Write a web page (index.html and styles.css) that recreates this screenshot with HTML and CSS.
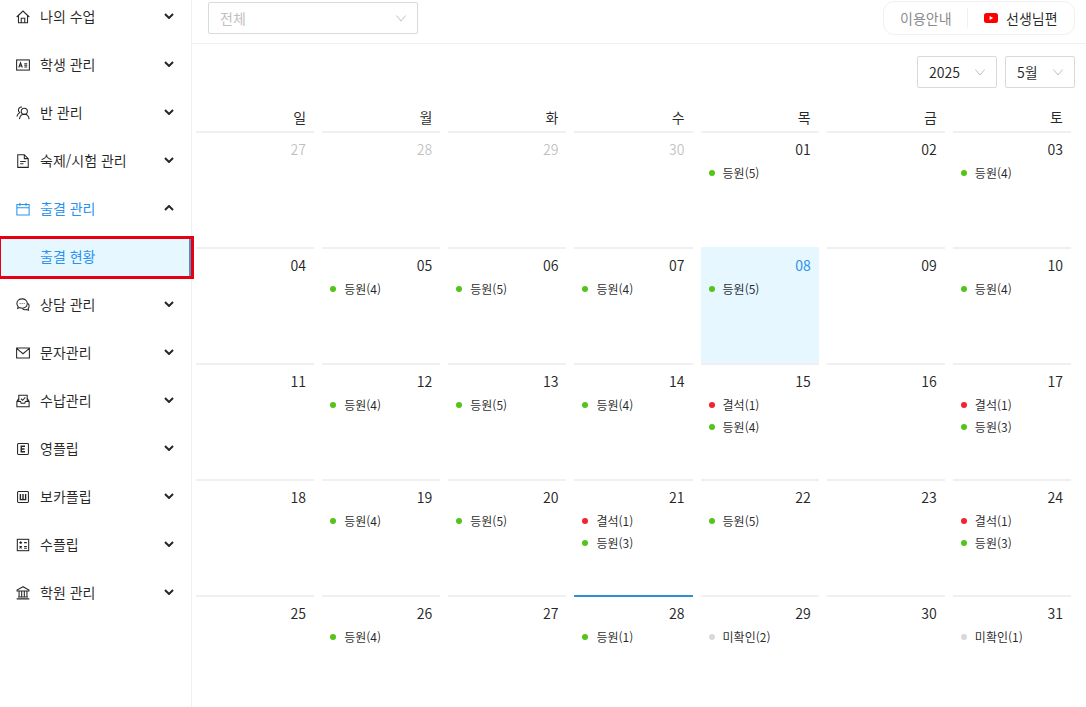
FILE: index.html
```html
<!DOCTYPE html>
<html lang="ko">
<head>
<meta charset="utf-8">
<title>출결 현황</title>
<link rel="stylesheet" href="styles.css">
</head>
<body>
<div class="app">
  <aside class="sidebar">
    <ul class="menu">
      <li class="item"><svg class="icon" viewBox="0 0 16 16"><path d="M.8 8 8 1.200 15.200 8M2.800 6.300v8.200h10.400V6.300M6 14.500V9.500h4v5"/></svg><span>나의 수업</span><svg class="chev" viewBox="0 0 10 6"><path d="M1 1l4 4 4-4"/></svg></li>
      <li class="item"><svg class="icon" viewBox="0 0 16 16"><rect x=".7" y="2.200" width="14.600" height="11.600"/><path d="M3.200 10.800 5.200 5.500l2 5.300M4 9.200h2.500M9.500 6.500h3.300M9.500 8.300h3.300M9.500 10.300h3.300"/></svg><span>학생 관리</span><svg class="chev" viewBox="0 0 10 6"><path d="M1 1l4 4 4-4"/></svg></li>
      <li class="item"><svg class="icon" viewBox="0 0 16 16"><circle cx="9.500" cy="6" r="3.500"/><path d="M4 15c.4-3.200 2.500-5.500 5.500-5.500s5.100 2.300 5.500 5.500M6.800 1.300C4.500.9 2.500 2.700 2.800 5c.1 1.200.7 2 1.500 2.600C2.800 8.500 1.500 10 1 12"/></svg><span>반 관리</span><svg class="chev" viewBox="0 0 10 6"><path d="M1 1l4 4 4-4"/></svg></li>
      <li class="item"><svg class="icon" viewBox="0 0 16 16"><path d="M2 .8h7.500L14 5.300v10H2zM9.500.8v4.500H14M4.800 8.500h6.400M4.800 11.200h3.700"/></svg><span>숙제/시험 관리</span><svg class="chev" viewBox="0 0 10 6"><path d="M1 1l4 4 4-4"/></svg></li>
      <li class="item blue"><svg class="icon" viewBox="0 0 16 16"><path d="M1 2.800h14v12H1zM1 6.500h14M4.500.8v3.700M11.500.8v3.700"/></svg><span>출결 관리</span><svg class="chev" viewBox="0 0 10 6"><path d="M1 5l4-4 4 4"/></svg></li>
      <li class="item sub"><span>출결 현황</span></li>
      <li class="item"><svg class="icon" viewBox="0 0 16 16"><path d="M7 1c-3.400 0-6 2.300-6 5.300 0 1.300.5 2.500 1.400 3.400l-.5 2.100 2.400-.9c.8.500 1.700.7 2.700.7 3.400 0 5.900-2.300 5.900-5.300S10.400 1 7 1zM13.600 6.200c1.100.9 1.600 2 1.400 3.400-.1.900-.5 1.700-1.100 2.300l.4 2-2.300-.8c-1.700.7-3.400.3-4.700-.9"/><path d="M4.300 6.300h.8M6.600 6.300h.8M8.900 6.300h.8"/></svg><span>상담 관리</span><svg class="chev" viewBox="0 0 10 6"><path d="M1 1l4 4 4-4"/></svg></li>
      <li class="item"><svg class="icon" viewBox="0 0 16 16"><path d="M.7 2.200h14.600v11.600H.7zM.7 2.800 8 8.800l7.300-6"/></svg><span>문자관리</span><svg class="chev" viewBox="0 0 10 6"><path d="M1 1l4 4 4-4"/></svg></li>
      <li class="item"><svg class="icon" viewBox="0 0 16 16"><path d="M3.200 8V1.500h9.600V8M1 8.500h4.200L6 10.500h4l.8-2H15v6H1zM1 8.500 3.200 5M15 8.500 12.800 5M5.600 5.300l1.900 1.900 3.200-3.400"/></svg><span>수납관리</span><svg class="chev" viewBox="0 0 10 6"><path d="M1 1l4 4 4-4"/></svg></li>
      <li class="item"><svg class="icon" viewBox="0 0 16 16"><rect x="1.800" y="1.800" width="12.400" height="12.400" rx="1"/><path class="heavy" d="M10.300 4.800H6v6.400h4.300M6 8h3.800"/></svg><span>영플립</span><svg class="chev" viewBox="0 0 10 6"><path d="M1 1l4 4 4-4"/></svg></li>
      <li class="item"><svg class="icon" viewBox="0 0 16 16"><rect x="1.800" y="1.800" width="12.400" height="12.400" rx="1"/><path class="heavy" d="M5 4.500v6.500h6V4.500M8 4.500V11"/></svg><span>보카플립</span><svg class="chev" viewBox="0 0 10 6"><path d="M1 1l4 4 4-4"/></svg></li>
      <li class="item"><svg class="icon" viewBox="0 0 16 16"><rect x="1.500" y="1.500" width="13" height="13"/><path d="M3.800 5.300h3.200M5.400 3.700v3.200M9.200 5.300h3.200M4.100 9.300l2.600 2.600M6.700 9.300l-2.600 2.600M9.200 9.600h3.200M9.200 11.600h3.200"/></svg><span>수플립</span><svg class="chev" viewBox="0 0 10 6"><path d="M1 1l4 4 4-4"/></svg></li>
      <li class="item"><svg class="icon" viewBox="0 0 16 16"><path d="M8 .8 1.200 4.500v1.300h13.600V4.500zM3.500 5.800v6.700M6.500 5.800v6.700M9.500 5.800v6.700M12.500 5.800v6.700M2.300 12.500h11.400M.8 14.700h14.400"/></svg><span>학원 관리</span><svg class="chev" viewBox="0 0 10 6"><path d="M1 1l4 4 4-4"/></svg></li>
    </ul>
  </aside>
  <main class="main">
    <header class="topbar">
      <div class="select wide"><span class="placeholder">전체</span><svg class="caret" viewBox="0 0 10 7"><path d="M.4.500 5 6l4.600-5.500"/></svg></div>
      <div class="pill">
        <span class="guide">이용안내</span>
        <span class="teacher"><svg class="yt" viewBox="0 0 14 10"><rect width="14" height="10" rx="2.500" fill="#f00"/><path d="M5.600 2.900v4.200L9.200 5z" fill="#fff"/></svg>선생님편</span>
      </div>
    </header>
    <div class="toolbar">
      <div class="select year"><span>2025</span><svg class="caret" viewBox="0 0 10 7"><path d="M.4.500 5 6l4.600-5.500"/></svg></div>
      <div class="select month"><span>5월</span><svg class="caret" viewBox="0 0 10 7"><path d="M.4.500 5 6l4.600-5.500"/></svg></div>
    </div>
    <div class="calendar">
      <div class="dow">일</div><div class="dow">월</div><div class="dow">화</div><div class="dow">수</div><div class="dow">목</div><div class="dow">금</div><div class="dow">토</div>

      <div class="cell muted"><div class="num">27</div></div>
      <div class="cell muted"><div class="num">28</div></div>
      <div class="cell muted"><div class="num">29</div></div>
      <div class="cell muted"><div class="num">30</div></div>
      <div class="cell"><div class="num">01</div><div class="ev green">등원(5)</div></div>
      <div class="cell"><div class="num">02</div></div>
      <div class="cell"><div class="num">03</div><div class="ev green">등원(4)</div></div>

      <div class="cell"><div class="num">04</div></div>
      <div class="cell"><div class="num">05</div><div class="ev green">등원(4)</div></div>
      <div class="cell"><div class="num">06</div><div class="ev green">등원(5)</div></div>
      <div class="cell"><div class="num">07</div><div class="ev green">등원(4)</div></div>
      <div class="cell selected"><div class="num">08</div><div class="ev green">등원(5)</div></div>
      <div class="cell"><div class="num">09</div></div>
      <div class="cell"><div class="num">10</div><div class="ev green">등원(4)</div></div>

      <div class="cell"><div class="num">11</div></div>
      <div class="cell"><div class="num">12</div><div class="ev green">등원(4)</div></div>
      <div class="cell"><div class="num">13</div><div class="ev green">등원(5)</div></div>
      <div class="cell"><div class="num">14</div><div class="ev green">등원(4)</div></div>
      <div class="cell"><div class="num">15</div><div class="ev red">결석(1)</div><div class="ev green">등원(4)</div></div>
      <div class="cell"><div class="num">16</div></div>
      <div class="cell"><div class="num">17</div><div class="ev red">결석(1)</div><div class="ev green">등원(3)</div></div>

      <div class="cell"><div class="num">18</div></div>
      <div class="cell"><div class="num">19</div><div class="ev green">등원(4)</div></div>
      <div class="cell"><div class="num">20</div><div class="ev green">등원(5)</div></div>
      <div class="cell"><div class="num">21</div><div class="ev red">결석(1)</div><div class="ev green">등원(3)</div></div>
      <div class="cell"><div class="num">22</div><div class="ev green">등원(5)</div></div>
      <div class="cell"><div class="num">23</div></div>
      <div class="cell"><div class="num">24</div><div class="ev red">결석(1)</div><div class="ev green">등원(3)</div></div>

      <div class="cell"><div class="num">25</div></div>
      <div class="cell"><div class="num">26</div><div class="ev green">등원(4)</div></div>
      <div class="cell"><div class="num">27</div></div>
      <div class="cell today"><div class="num">28</div><div class="ev green">등원(1)</div></div>
      <div class="cell"><div class="num">29</div><div class="ev gray">미확인(2)</div></div>
      <div class="cell"><div class="num">30</div></div>
      <div class="cell"><div class="num">31</div><div class="ev gray">미확인(1)</div></div>
    </div>
  </main>
</div>
</body>
</html>
```
FILE: styles.css
```css
* { box-sizing: border-box; }
html, body { margin: 0; height: 100%; overflow: hidden; background: #fff; }
body {
  font-family: "Noto Sans CJK KR", "Noto Sans", sans-serif;
  font-size: 14px;
  color: rgba(0, 0, 0, 0.85);
}
.app { display: flex; height: 707px; overflow: hidden; }

/* sidebar */
.sidebar { width: 192px; flex: none; border-right: 1px solid #f0f0f0; }
.menu {
  display: flex;
  flex-direction: column;
  gap: 8px;
  list-style: none;
  margin: -3px 0 0;
  padding: 0;
}
.item {
  display: flex;
  align-items: center;
  flex: none;
  height: 40px;
  padding: 0 17px 0 16px;
  color: rgba(0, 0, 0, 0.85);
}
.item span { flex: 1; margin-left: 10px; line-height: 38px; padding-bottom: 2px; }
.icon {
  width: 14px; height: 14px; flex: none;
  fill: none; stroke: currentColor; stroke-width: 1.2;
}
.icon .heavy { stroke-width: 1.6; }
.chev {
  width: 10px; height: 6px; flex: none; margin-top: -2px;
  fill: none; stroke: rgba(0, 0, 0, 0.85); stroke-width: 2;
}
.blue { color: #2a92ee; }
.sub {
  position: relative;
  width: 191px;
  padding-left: 30px;
  color: #2a92ee;
  background: #e6f7ff;
  border-right: 2px solid #5a8cc4;
}
.sub::after {
  content: "";
  position: absolute;
  top: -1px; bottom: -2px; left: -2px; right: -5px;
  border: 3px solid #e60012;
}

/* top bar */
.main { flex: 1; min-width: 0; }
.topbar {
  display: flex;
  justify-content: space-between;
  height: 44px;
  padding: 2px 11px 0 16px;
  border-bottom: 1px solid #f0f0f0;
}
.select {
  display: flex;
  align-items: center;
  justify-content: space-between;
  height: 32px;
  padding: 0 11px;
  border: 1px solid #d9d9d9;
  border-radius: 2px;
  background: #fff;
}
.wide { width: 210px; }
.placeholder { color: #bfbfbf; }
.caret { width: 10px; height: 7px; fill: none; stroke: #bfbfbf; stroke-width: 1; }
.pill {
  display: flex;
  align-items: center;
  width: 192px;
  height: 34px;
  margin-top: -1px;
  border: 1px solid #f0f0f0;
  border-radius: 11px;
}
.guide {
  width: 84px;
  padding-left: 16px;
  color: #8c8c8c;
  line-height: 20px;
  border-right: 1px solid #f0f0f0;
}
.teacher { display: flex; align-items: center; padding-left: 16px; }
.yt { width: 14px; height: 10px; margin-right: 8px; }

/* toolbar */
.toolbar { display: flex; justify-content: flex-end; gap: 8px; padding: 12px 11px 0 0; }
.year { width: 80px; }
.month { width: 70px; }

/* calendar */
.calendar {
  display: grid;
  grid-template-columns: repeat(7, 1fr);
  grid-template-rows: 43px;
  grid-auto-rows: 116px;
  margin-right: 11px;
}
.dow {
  margin: 0 4px;
  padding-right: 8px;
  text-align: right;
  line-height: 58px;
}
.cell {
  margin: 0 4px;
  padding: 4px 8px 0;
  border-top: 2px solid #f0f0f0;
}
.num { height: 25px; line-height: 24px; text-align: right; }
.muted .num { color: rgba(0, 0, 0, 0.25); }
.selected { background: #e6f7ff; border-top-color: #e6f7ff; }
.selected .num { color: #2a92ee; }
.today { border-top-color: #2f8fd6; }
.ev {
  display: flex;
  align-items: center;
  gap: 8px;
  height: 22px;
  font-size: 12px;
  line-height: 22px;
}
.ev::before { content: ""; width: 6px; height: 6px; border-radius: 50%; flex: none; }
.green::before { background: #52c41a; }
.red::before { background: #f5222d; }
.gray::before { background: #d9d9d9; }
```
